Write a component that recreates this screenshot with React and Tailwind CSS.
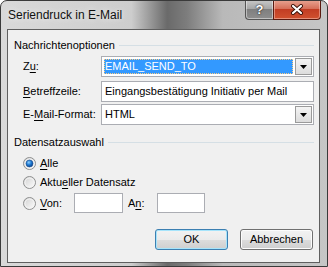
import React from 'react';

function Radio({ checked }) {
  return (
    <svg width="13" height="13" viewBox="0 0 13 13" className="shrink-0">
      <defs>
        <linearGradient id="rf" x1="0" y1="0" x2="1" y2="1">
          <stop offset="0" stopColor="#cfcfcf" />
          <stop offset="1" stopColor="#ffffff" />
        </linearGradient>
        <radialGradient id="rd" cx="0.4" cy="0.35" r="0.7">
          <stop offset="0" stopColor="#8fd0ff" />
          <stop offset="0.5" stopColor="#1d79d2" />
          <stop offset="1" stopColor="#0b3f86" />
        </radialGradient>
      </defs>
      <circle cx="6.5" cy="6.5" r="6" fill="url(#rf)" stroke="#8e8f8f" strokeWidth="1" />
      <circle cx="6.5" cy="6.5" r="4.5" fill="none" stroke="#f4f4f4" strokeWidth="1" />
      {checked && <circle cx="6.5" cy="6.5" r="3.5" fill="url(#rd)" stroke="#1c4f8e" strokeWidth="0.6" />}
    </svg>
  );
}

function Arrow() {
  return (
    <div className="w-[17px] h-[17px] border border-[#9a9a9a] bg-[linear-gradient(#f4f4f4,#dcdcdc)] flex items-center justify-center">
      <svg width="7" height="4" viewBox="0 0 7 4">
        <path d="M0 0h7L3.5 4z" fill="#000" />
      </svg>
    </div>
  );
}

function U({ children }) {
  return <span className="underline underline-offset-[2px]">{children}</span>;
}

function Label({ children }) {
  return <div className="w-[78px] shrink-0">{children}</div>;
}

function Group({ title, mt }) {
  return (
    <div className={`flex items-center h-[13px] leading-[13px] pl-[6px] pr-[5px] ${mt}`}>
      <span>{title}</span>
      <div className="flex-1 h-px bg-[#d5dfe5] ml-[4px]" />
    </div>
  );
}

function Btn({ children, primary }) {
  return (
    <div
      className={`w-[73px] h-[21px] rounded-[3px] flex items-center justify-center border ${
        primary
          ? 'border-[#3c7fb1] shadow-[inset_0_0_0_1px_#a6e4fb] bg-[linear-gradient(#f2f2f2_0%,#ebebeb_50%,#dddddd_51%,#cfcfcf_100%)]'
          : 'border-[#707070] shadow-[inset_0_0_0_1px_#fcfcfc] bg-[linear-gradient(#f2f2f2_0%,#ebebeb_50%,#dddddd_51%,#cfcfcf_100%)]'
      }`}
    >
      {children}
    </div>
  );
}

export default function App() {
  return (
    <div
      className="w-[328px] h-[267px] border border-[#3a3a3a] rounded-t-[7px] flex flex-col overflow-hidden bg-[linear-gradient(90deg,#d9d9d9_0%,#cdcdcd_40%,#6a6a6a_51%,#7d7d7d_57%,#b9b9b9_68%,#c6c6c6_100%)]"
      style={{ fontFamily: '"Liberation Sans", Arial, sans-serif' }}
    >
      <div className="h-[28px] shrink-0 flex items-start pl-[7px] pr-[6px]">
        <div className="mt-[7px] text-[12px] leading-[14px] text-[#111] [text-shadow:0_0_6px_rgba(255,255,255,0.9)]">
          Seriendruck in E-Mail
        </div>
        <div className="ml-auto -mt-px flex">
          <div className="w-[28px] h-[20px] rounded-bl-[4px] border border-[#555] border-t-0 border-r-0 bg-[linear-gradient(#c9c9c9_0%,#a7a7a7_45%,#7f7f7f_50%,#8e8e8e_100%)] flex items-center justify-center shadow-[inset_0_0_0_1px_rgba(255,255,255,0.45)]">
            <span className="text-[13px] font-bold text-white leading-none [text-shadow:0_0_1px_#222,0_0_2px_#222]">?</span>
          </div>
          <div className="w-[48px] h-[20px] rounded-br-[4px] border border-[#5a1a10] border-t-0 bg-[linear-gradient(#e9a593_0%,#d6705a_45%,#c23d23_50%,#d0512f_100%)] flex items-center justify-center shadow-[inset_0_0_0_1px_rgba(255,220,210,0.45)]">
            <svg width="14" height="11" viewBox="0 0 14 11">
              <path d="M3 2l8 7M11 2l-8 7" stroke="#3a1108" strokeWidth="4" strokeLinecap="round" />
              <path d="M3 2l8 7M11 2l-8 7" stroke="#fff" strokeWidth="2.2" strokeLinecap="round" />
            </svg>
          </div>
        </div>
      </div>

      <div className="ml-[6px] mr-[7px] border border-[#5f5f5f] bg-[#f0f0f0] h-[234px] flex flex-col text-[11px] leading-[13px] text-black">
        <Group title="Nachrichtenoptionen" mt="mt-[9px]" />

        <div className="flex items-center pl-[15px] mt-[4px] h-[21px]">
          <Label>Z<U>u</U>:</Label>
          <div className="w-[213px] h-[21px] border border-[#abadb3] bg-white flex items-center pl-[2px] pr-px gap-[2px]">
            <div className="flex-1 h-[15px] bg-[#3399ff] text-white pl-px leading-[15px] outline-1 outline-dotted outline-[#ffcc80] -outline-offset-1">
              EMAIL_SEND_TO
            </div>
            <Arrow />
          </div>
        </div>

        <div className="flex items-center pl-[15px] mt-[4px] h-[21px]">
          <Label><U>B</U>etreffzeile:</Label>
          <div className="w-[213px] h-[21px] border border-[#abadb3] bg-white flex items-center pl-[3px]">
            Eingangsbestätigung Initiativ per Mail
          </div>
        </div>

        <div className="flex items-center pl-[15px] mt-[2px] h-[21px]">
          <Label>E-<U>M</U>ail-Format:</Label>
          <div className="w-[213px] h-[21px] border border-[#abadb3] bg-white flex items-center pl-[3px] pr-px">
            <div className="flex-1">HTML</div>
            <Arrow />
          </div>
        </div>

        <Group title="Datensatzauswahl" mt="mt-[11px]" />

        <div className="flex items-center pl-[15px] mt-[6px] h-[16px] gap-[4px]">
          <Radio checked />
          <span><U>A</U>lle</span>
        </div>
        <div className="flex items-center pl-[15px] mt-[3px] h-[16px] gap-[4px]">
          <Radio />
          <span>Aktu<U>e</U>ller Datensatz</span>
        </div>
        <div className="flex items-center pl-[15px] mt-[3px] h-[20px]">
          <Radio />
          <span className="ml-[4px] w-[34px]"><U>V</U>on:</span>
          <div className="w-[49px] h-[20px] border border-[#abadb3] bg-white" />
          <span className="ml-[5px] w-[29px]">A<U>n</U>:</span>
          <div className="w-[48px] h-[20px] border border-[#abadb3] bg-white" />
        </div>

        <div className="flex justify-end gap-[12px] pr-[6px] mt-[16px]">
          <Btn primary>OK</Btn>
          <Btn>Abbrechen</Btn>
        </div>
      </div>
    </div>
  );
}
